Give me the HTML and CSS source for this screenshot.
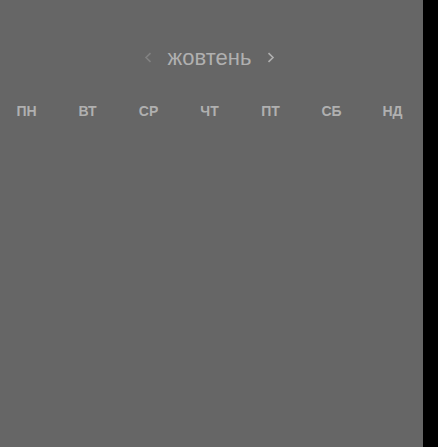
FILE: index.html
```html
<!DOCTYPE html>
<html lang="uk">
<head>
<meta charset="utf-8">
<title>Календар</title>
<link rel="stylesheet" href="styles.css">
</head>
<body>
<main class="calendar">
  <header class="month">
    <button class="nav prev" type="button" aria-label="Попередній місяць" disabled>
      <svg viewBox="0 0 8 12"><path d="M6.5 1.2 2 5.5l4.500 4.300"/></svg>
    </button>
    <h1 class="title">жовтень</h1>
    <button class="nav" type="button" aria-label="Наступний місяць">
      <svg viewBox="0 0 8 12"><path d="M1.500 1.200 6 5.500l-4.500 4.300"/></svg>
    </button>
  </header>
  <table class="week">
    <thead>
      <tr><th>ПН</th><th>ВТ</th><th>СР</th><th>ЧТ</th><th>ПТ</th><th>СБ</th><th>НД</th></tr>
    </thead>
  </table>
</main>
</body>
</html>
```
FILE: styles.css
```css
* {
  box-sizing: border-box;
}

body {
  margin: 0;
  background: #000;
  color: #b0b0b0;
  font-family: "Liberation Sans", Arial, sans-serif;
}

.calendar {
  min-height: 100vh;
  margin: 0 15px 0 -4px;
  padding-top: 44px;
  background: #666;
}

.month {
  display: flex;
  justify-content: center;
  align-items: center;
  gap: 12px;
}

.title {
  margin: 0;
  font-size: 22px;
  line-height: 28px;
  font-weight: 400;
}

.nav {
  display: flex;
  padding: 0 4px;
  border: 0;
  background: none;
  color: #b0b0b0;
}

.prev {
  color: #828282;
}

.nav svg {
  width: 8px;
  height: 12px;
  fill: none;
  stroke: currentColor;
  stroke-width: 1.6;
}

.week {
  width: 100%;
  margin-top: 31px;
  table-layout: fixed;
  border-collapse: collapse;
}

.week th {
  padding: 0;
  font-size: 14px;
  line-height: 16px;
  font-weight: 700;
  text-align: center;
}
```
